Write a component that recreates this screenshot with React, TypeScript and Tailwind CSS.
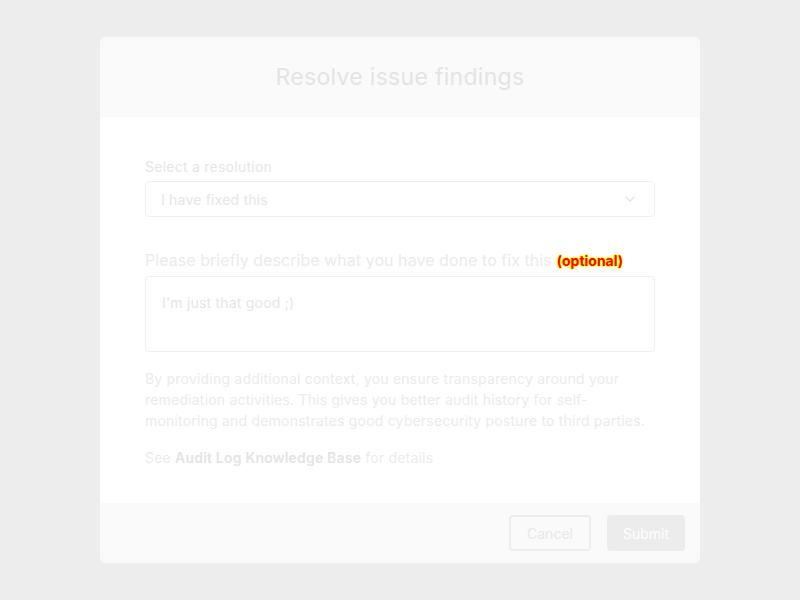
import { ChevronDown } from "lucide-react";

export default function App() {
  return (
    <div className="flex min-h-[600px] w-full items-start justify-center bg-[#ededed] pt-[37px] font-['Inter',sans-serif]">
      <div className="w-[600px] overflow-hidden rounded-md bg-white">
        {/* Header */}
        <div className="flex h-[80px] items-center justify-center bg-[#fafafa]">
          <h1 className="text-[23px] font-normal tracking-[0.3px] text-[#e4e4e4]">Resolve issue findings</h1>
        </div>

        {/* Body */}
        <div className="px-[45px] pb-[35px] pt-[40px]">
          <label className="block text-[14px] leading-5 tracking-[0.25px] text-[#e6e6e6]">Select a resolution</label>
          <div className="mt-[4px] flex h-[36px] items-center justify-between rounded border border-[#f0f0f0] pl-[15px] pr-[16px]">
            <span className="text-[14px] tracking-[0.2px] text-[#e6e6e6]">I have fixed this</span>
            <ChevronDown className="h-[16px] w-[16px] text-[#e3e3e3]" strokeWidth={1.75} />
          </div>

          <div className="mt-[31px] flex items-center gap-[5px]">
            <span className="text-[16px] leading-6 tracking-[0.05px] text-[#ebebeb]">
              Please briefly describe what you have done to fix this
            </span>
            <span className="text-[14px] font-bold text-[#ff0000] [text-shadow:1px_0_0_#ffff00,-1px_0_0_#ffff00,0_1px_0_#ffff00,0_-1px_0_#ffff00]">
              (optional)
            </span>
          </div>
          <div className="mt-[4px] h-[76px] rounded border border-[#f0f0f0] px-[16px] pt-[13px]">
            <span className="text-[14px] tracking-[0.2px] text-[#e6e6e6]">I'm just that good ;)</span>
          </div>

          <p className="mt-[16px] text-[14px] leading-[21px] tracking-[0.2px] text-[#ebebeb]">
            By providing additional context, you ensure transparency around your remediation
            activities. This gives you better audit history for self-monitoring and demonstrates
            good cybersecurity posture to third parties.
          </p>
          <p className="mt-[16px] text-[14px] leading-[21px] tracking-[0.2px] text-[#ebebeb]">
            See <span className="font-semibold text-[#e4e4e4]">Audit Log Knowledge Base</span> for
            details
          </p>
        </div>

        {/* Footer */}
        <div className="flex h-[60px] items-center justify-end gap-[16px] bg-[#fafafa] pr-[15px]">
          <button className="h-[36px] w-[82px] rounded border-2 border-[#ededed] text-[14px] text-[#e8e8e8]">
            Cancel
          </button>
          <button className="h-[36px] w-[78px] rounded bg-[#ececec] text-[14px] text-white">
            Submit
          </button>
        </div>
      </div>
    </div>
  );
}
